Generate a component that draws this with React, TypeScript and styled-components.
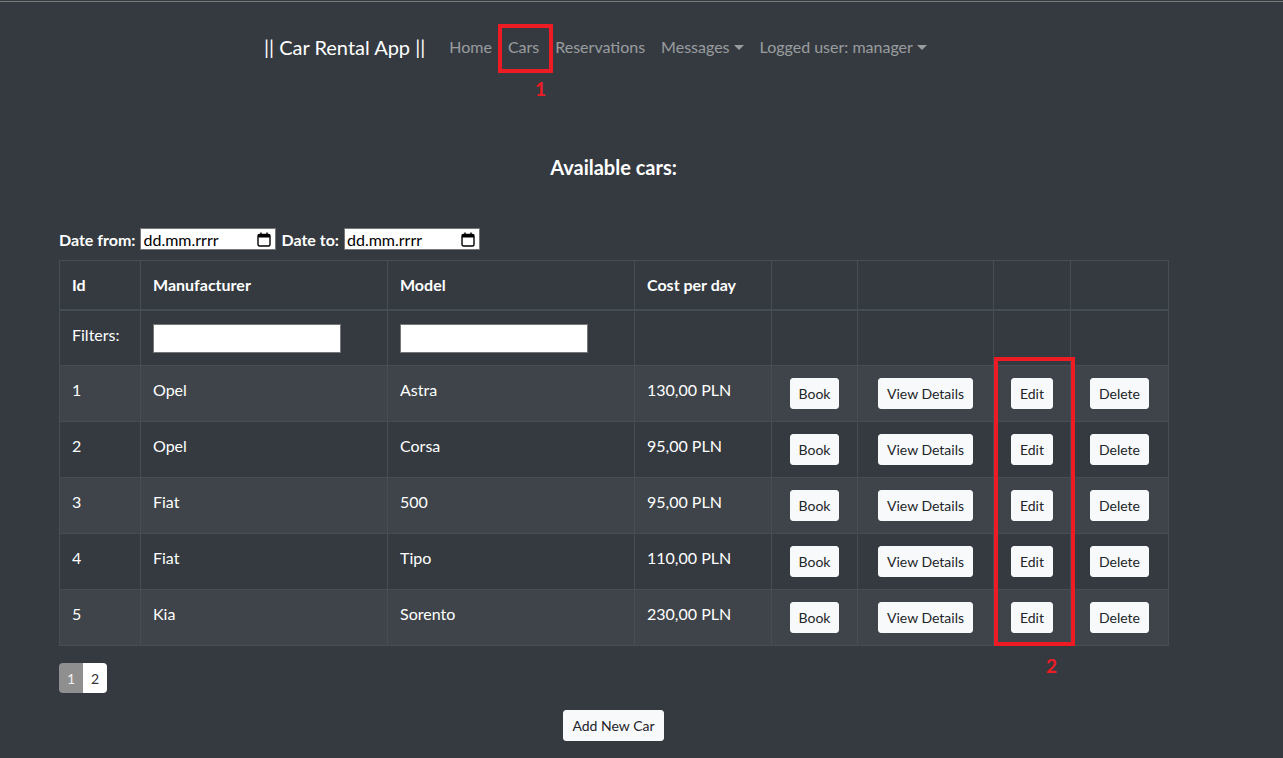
import styled, { createGlobalStyle } from 'styled-components'

const GlobalStyle = createGlobalStyle`
    html, body {
        margin: 0;
        padding: 0;
        background: #343a40;
        font-family: Lato, 'Liberation Sans', sans-serif;
        color: #fff;
    }
`

const cars = [
    { id: 1, manufacturer: 'Opel', model: 'Astra', cost: '130,00 PLN' },
    { id: 2, manufacturer: 'Opel', model: 'Corsa', cost: '95,00 PLN' },
    { id: 3, manufacturer: 'Fiat', model: '500', cost: '95,00 PLN' },
    { id: 4, manufacturer: 'Fiat', model: 'Tipo', cost: '110,00 PLN' },
    { id: 5, manufacturer: 'Kia', model: 'Sorento', cost: '230,00 PLN' },
]

const colWidths = [81, 247, 247, 137, 86, 136, 77, 98]

const CalendarIcon = () => (
    <svg width='14' height='15' viewBox='0 0 14 15'>
        <rect x='1' y='2.5' width='12' height='11.5' rx='1.5' fill='none' stroke='#000' strokeWidth='1.4' />
        <rect x='1' y='2.5' width='12' height='3' fill='#000' />
        <rect x='3.3' y='0.5' width='1.4' height='3' fill='#000' />
        <rect x='9.3' y='0.5' width='1.4' height='3' fill='#000' />
    </svg>
)

export default function App() {
    return (
        <Page>
            <GlobalStyle />
            <Navbar>
                <Brand>|| Car Rental App ||</Brand>
                <NavLink>Home</NavLink>
                <NavLink>Cars</NavLink>
                <NavLink>Reservations</NavLink>
                <NavLink $dropdown>Messages</NavLink>
                <NavLink $dropdown>Logged user: manager</NavLink>
            </Navbar>

            <Main>
                <Title>Available cars:</Title>

                <DateRow>
                    <DateLabel>Date from:</DateLabel>
                    <DateInput>
                        <span>dd.mm.rrrr</span>
                        <CalendarIcon />
                    </DateInput>
                    <DateLabel>Date to:</DateLabel>
                    <DateInput>
                        <span>dd.mm.rrrr</span>
                        <CalendarIcon />
                    </DateInput>
                </DateRow>

                <Table>
                    <colgroup>
                        {colWidths.map((w, i) => (
                            <col key={i} style={{ width: w }} />
                        ))}
                    </colgroup>
                    <thead>
                        <HeadRow>
                            <Th>Id</Th>
                            <Th>Manufacturer</Th>
                            <Th>Model</Th>
                            <Th>Cost per day</Th>
                            <Th />
                            <Th />
                            <Th />
                            <Th />
                        </HeadRow>
                        <FilterRow>
                            <Td>Filters:</Td>
                            <Td>
                                <FilterInput />
                            </Td>
                            <Td>
                                <FilterInput />
                            </Td>
                            <Td />
                            <Td />
                            <Td />
                            <Td />
                            <Td />
                        </FilterRow>
                    </thead>
                    <tbody>
                        {cars.map((car, i) => (
                            <DataRow key={car.id} $striped={i % 2 === 0}>
                                <Td>{car.id}</Td>
                                <Td>{car.manufacturer}</Td>
                                <Td>{car.model}</Td>
                                <Td>{car.cost}</Td>
                                <ActionCell>
                                    <LightButton>Book</LightButton>
                                </ActionCell>
                                <ActionCell>
                                    <LightButton>View Details</LightButton>
                                </ActionCell>
                                <ActionCell>
                                    <LightButton>Edit</LightButton>
                                </ActionCell>
                                <ActionCell>
                                    <LightButton>Delete</LightButton>
                                </ActionCell>
                            </DataRow>
                        ))}
                    </tbody>
                </Table>

                <Pagination>
                    <PageItem $active>1</PageItem>
                    <PageItem>2</PageItem>
                </Pagination>

                <Footer>
                    <LightButton>Add New Car</LightButton>
                </Footer>
            </Main>

            {/* annotation marks drawn over the screenshot */}
            <MarkBox style={{ left: 498, top: 22, width: 55, height: 49 }} />
            <MarkLabel style={{ left: 535, top: 75 }}>1</MarkLabel>
            <MarkBox style={{ left: 994, top: 355, width: 81, height: 289 }} />
            <MarkLabel style={{ left: 1046, top: 652 }}>2</MarkLabel>
        </Page>
    )
}

const Page = styled.div`
    position: relative;
    min-height: 758px;
    margin-top: 1px;
    border-top: 1px solid #7a7a7a;
    overflow: hidden;
`

const Navbar = styled.nav`
    display: flex;
    align-items: center;
    height: 40px;
    margin-top: 25px;
    padding-left: 264px;
`

const Brand = styled.span`
    font-size: 20px;
    line-height: 30px;
    margin-right: 16px;
    color: #fff;
`

const NavLink = styled.span<{ $dropdown?: boolean }>`
    font-size: 16px;
    line-height: 24px;
    padding: 8px;
    color: rgba(255, 255, 255, 0.5);

    &::after {
        content: '';
        display: ${(p) => (p.$dropdown ? 'inline-block' : 'none')};
        margin-left: 4px;
        vertical-align: 3px;
        border-top: 5px solid;
        border-left: 5px solid transparent;
        border-right: 5px solid transparent;
    }
`

const Main = styled.main`
    width: 1109px;
    margin-left: 59px;
    display: flex;
    flex-direction: column;
`

const Title = styled.h3`
    margin: 86px 0 0;
    text-align: center;
    font-size: 20px;
    font-weight: 700;
    line-height: 28px;
`

const DateRow = styled.div`
    display: flex;
    align-items: center;
    gap: 5px;
    margin-top: 46px;
    height: 24px;
`

const DateLabel = styled.label`
    font-size: 16px;
    font-weight: 700;
`

const DateInput = styled.div`
    box-sizing: border-box;
    width: 136px;
    height: 22px;
    display: flex;
    align-items: center;
    justify-content: space-between;
    padding: 0 4px 0 2px;
    background: #fff;
    border: 1px solid #767676;
    color: #000;
    font-size: 16px;
`

const Table = styled.table`
    margin-top: 9px;
    width: 1109px;
    table-layout: fixed;
    border-collapse: collapse;
    border: 1px solid #8c8c8c;
    font-size: 16px;
    color: #fff;
`

const HeadRow = styled.tr`
    height: 49px;
`

const FilterRow = styled.tr`
    height: 56px;
`

const DataRow = styled.tr<{ $striped: boolean }>`
    height: 56px;
    background: ${(p) => (p.$striped ? 'rgba(255, 255, 255, 0.05)' : 'transparent')};
`

const Th = styled.th`
    padding: 11px 12px;
    text-align: left;
    font-weight: 700;
    line-height: 24px;
    border: 1px solid #454d55;
    border-bottom-width: 2px;
`

const Td = styled.td`
    padding: 12px;
    vertical-align: top;
    line-height: 24px;
    border: 1px solid #454d55;
`

const ActionCell = styled(Td)`
    text-align: center;
`

const FilterInput = styled.input`
    box-sizing: border-box;
    width: 188px;
    height: 29px;
    margin-top: 1px;
    border: 1px solid #767676;
    background: #fff;
    display: block;
`

const LightButton = styled.button`
    height: 31px;
    padding: 0 8px;
    font-family: inherit;
    font-size: 14px;
    color: #212529;
    background: #f8f9fa;
    border: 1px solid #f8f9fa;
    border-radius: 3px;
    cursor: pointer;
`

const Pagination = styled.div`
    display: flex;
    margin-top: 17px;
    align-self: flex-start;
    border-radius: 4px;
    overflow: hidden;
`

const PageItem = styled.span<{ $active?: boolean }>`
    width: 24px;
    height: 30px;
    display: flex;
    align-items: center;
    justify-content: center;
    font-size: 14px;
    background: ${(p) => (p.$active ? '#8f8f8f' : '#fff')};
    color: ${(p) => (p.$active ? '#f0f0f0' : '#333')};
`

const Footer = styled.div`
    display: flex;
    justify-content: center;
    margin-top: 17px;
`

const MarkBox = styled.div`
    position: absolute;
    box-sizing: border-box;
    border: 4px solid #ed1c24;
`

const MarkLabel = styled.span`
    position: absolute;
    color: #ed1c24;
    font-size: 19px;
    font-weight: 700;
    line-height: 24px;
`
